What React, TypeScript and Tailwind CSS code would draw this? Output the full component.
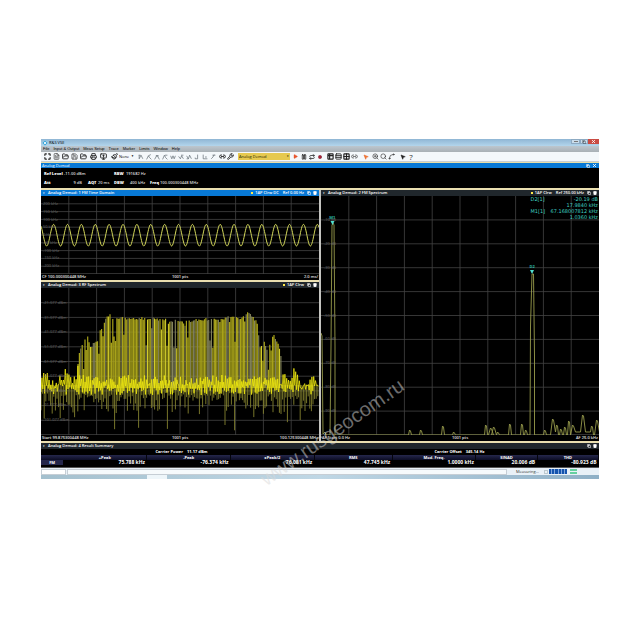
import React from "react";
import {
  Maximize, FileText, FolderOpen, Save, Printer, Wrench, MonitorUp, Paintbrush, Pause, Play, Repeat, Circle,
  Table2, Rows3, Grid2x2, Link2, MousePointer2, ZoomIn, Search, Spline, Copy, Trash2, X,
} from "lucide-react";

const rand = (seed: number) => {
  let s = seed;
  return () => {
    s = (s * 1664525 + 1013904223) % 4294967296;
    return s / 4294967296;
  };
};

const menus = ["File", "Input & Output", "Meas Setup", "Trace", "Marker", "Limits", "Window", "Help"];

function Tool({ label, className = "w-2", children }: { label: string; className?: string; children: React.ReactNode }) {
  return (
    <button type="button" aria-label={label} className={`flex h-2 shrink-0 items-center justify-center text-[#222] ${className}`}>
      {children}
    </button>
  );
}

const ic = "h-[7px] w-[7px]";

const peakShapes = [
  "M1 2h3M2 2v6l3-6 3 6",
  "M1 9l3-6 2 3 3 3M4 3l4-2",
  "M1 9l4-7 4 7M3 3h5",
  "M1 9l3-7 2 4 3 3M5 2h4",
  "M1 3l2 5 2-5 2 5 2-5",
  "M1 4l3 4 2-5 3 5M5 2h4",
  "M1 3l3 5 2-6 3 6M1 8h3",
  "M6 1v7h-4M2 6v2",
  "M2 1v7h7M5 5h3",
  "M2 8l3-3 2-4M4 2h5",
];

function Toolbar() {
  return (
    <div className="flex h-[10px] items-center overflow-hidden border-b border-[#c9cfd4] bg-[#f4f8fb] pl-[2px]">
      <div className="flex items-center gap-[1px]">
        <Tool label="Full screen"><Maximize className={ic} strokeWidth={4} /></Tool>
        <Tool label="New"><FileText className={ic} /></Tool>
        <Tool label="Open"><FolderOpen className={ic} strokeWidth={3} /></Tool>
        <Tool label="Save"><Save className={ic} /></Tool>
        <Tool label="Recall"><FolderOpen className={ic} strokeWidth={3} /></Tool>
        <Tool label="Print" className="w-[10px]"><Printer className={ic} strokeWidth={3} /></Tool>
        <Tool label="Export" className="w-[9px]"><MonitorUp className={ic} strokeWidth={3} /></Tool>
        <Tool label="Preset" className="w-[10px]"><Paintbrush className={ic} strokeWidth={3} /></Tool>
      </div>
      <select aria-label="Marker mode" className="w-[12px] appearance-none bg-transparent text-[4px] leading-none text-black">
        <option>None</option>
      </select>
      <span className="mr-[3px] text-[3px] leading-none">▼</span>
      {peakShapes.map((d, i) => (
        <Tool key={i} label={`Marker function ${i + 1}`} className="w-[8px]">
          <svg viewBox="0 0 10 10" className="h-[6px] w-[6px]" fill="none" stroke="#59636b" strokeWidth="1.1">
            <path d={d} />
          </svg>
        </Tool>
      ))}
      <Tool label="Limit line" className="ml-[2px] w-[8px]"><Link2 className={ic} strokeWidth={3} /></Tool>
      <Tool label="Configure" className="w-[8px]"><Wrench className={ic} strokeWidth={3} /></Tool>
      <select aria-label="Channel" className="ml-[3px] h-[7px] w-[49px] shrink-0 appearance-none bg-[#e6c94f] pl-[1px] text-[4px] leading-none text-[#221c00]">
        <option>Analog Demod</option>
      </select>
      <span className="h-[7px] bg-[#e6c94f] pr-[1px] text-[3px] leading-[7px]">▾</span>
      <Tool label="Run" className="ml-[2px] w-[8px]"><Play className="h-[5px] w-[5px] fill-[#e8532a] text-[#e8532a]" /></Tool>
      <Tool label="Pause" className="w-[8px]"><Pause className="h-[6px] w-[6px]" strokeWidth={3} /></Tool>
      <Tool label="Repeat" className="w-[8px]"><Repeat className="h-[6px] w-[6px]" strokeWidth={3} /></Tool>
      <Tool label="Record" className="w-[8px]"><Circle className="h-[4px] w-[4px] fill-[#b21f35] text-[#7b3844]" strokeWidth={3} /></Tool>
      <Tool label="Result table" className="ml-[3px] w-[8px]"><Table2 className={ic} strokeWidth={4} /></Tool>
      <Tool label="Rows" className="w-[8px]"><Rows3 className={ic} strokeWidth={3} /></Tool>
      <Tool label="Grid" className="w-[8px]"><Grid2x2 className={ic} strokeWidth={4} /></Tool>
      <Tool label="Link" className="w-[8px]"><Link2 className={ic} /></Tool>
      <Tool label="Select" className="ml-[3px] w-[8px]"><MousePointer2 className="h-[6px] w-[6px] fill-[#ef7a35] text-[#e8632a]" /></Tool>
      <Tool label="Zoom in" className="ml-[2px] w-[8px]"><ZoomIn className={ic} /></Tool>
      <Tool label="Zoom" className="w-[8px]"><Search className={ic} /></Tool>
      <Tool label="Trace link" className="w-[8px]"><Spline className={ic} /></Tool>
      <Tool label="Pointer help" className="ml-[3px] w-[8px]"><MousePointer2 className="h-[6px] w-[6px] fill-[#222]" /></Tool>
      <button type="button" aria-label="Help" className="w-[8px] text-center text-[8px] leading-none text-[#333]">?</button>
    </div>
  );
}

function WindowIcons() {
  return (
    <span className="flex items-center gap-[2px] pl-[2px]">
      <button type="button" aria-label="Restore panel"><Copy className="h-[4px] w-[4px]" strokeWidth={4} /></button>
      <button type="button" aria-label="Delete panel"><Trash2 className="h-[4px] w-[4px] fill-white" strokeWidth={4} /></button>
    </span>
  );
}

function PanelTitle({ title, trace, reference, active }: { title: string; trace?: string; reference?: string; active?: boolean }) {
  return (
    <header className={`flex h-[6px] items-center px-[2px] text-[4px] leading-none text-white ${active ? "bg-[#0879d6]" : "bg-[#20272c]"}`}>
      <span className="w-[5px] text-[3px] leading-none">▾</span>
      <h2 className="font-semibold">{title}</h2>
      <span className="ml-auto flex items-center gap-[1px] font-semibold">
        {trace && <i className="h-[2px] w-[2px] bg-[#ffe94a]" />}
        {trace && <span className="pl-[1px]">{trace}</span>}
        {reference && <span className="pl-[3px]">{reference}</span>}
        <WindowIcons />
      </span>
    </header>
  );
}

function PlotFooter({ left, mid, right }: { left: string; mid: string; right: string }) {
  return (
    <footer className="grid h-[6px] grid-cols-3 items-center px-[1px] text-[4px] leading-none font-semibold whitespace-nowrap text-[#e4e4e4]">
      <span>{left}</span>
      <span className="text-center">{mid}</span>
      <span className="text-right">{right}</span>
    </footer>
  );
}

function Grid({ w, h, color }: { w: number; h: number; color: string }) {
  const lines = [];
  for (let i = 1; i < 10; i++) {
    lines.push(<path key={`v${i}`} d={`M${(w * i) / 10} 0V${h}`} />);
    lines.push(<path key={`h${i}`} d={`M0 ${(h * i) / 10}H${w}`} />);
  }
  return <g stroke={color} strokeWidth="0.8">{lines}<path d={`M0 ${h - 0.4}H${w}`} /></g>;
}

function Scale({ labels, className }: { labels: string[]; className: string }) {
  return (
    <ol className={`absolute inset-x-0 flex flex-col justify-between text-[4px] leading-none text-[#666] ${className}`}>
      {labels.map((l) => (
        <li key={l} className="h-[4px]">{l}</li>
      ))}
    </ol>
  );
}

function TimePlot() {
  let d = "";
  for (let x = 0; x <= 278; x += 0.5) {
    const y = 39.2 - 10.8 * Math.cos((2 * Math.PI * (x - 12.6)) / 13.88);
    d += `${x ? "L" : "M"}${x} ${y.toFixed(1)}`;
  }
  return (
    <div className="relative">
      <svg viewBox="0 0 278 78" preserveAspectRatio="none" className="block h-[78px] w-full">
        <Grid w={278} h={78} color="#444" />
        <path d={d} fill="none" stroke="#d3d75a" strokeWidth="1" />
      </svg>
      <Scale className="top-[6px] bottom-[6px] pl-[2px]" labels={["200 kHz", "150 kHz", "100 kHz", "50 kHz", "0 Hz", "-50 kHz", "-100 kHz", "-150 kHz", "-200 kHz"]} />
    </div>
  );
}

const envelope: [number, number][] = [
  [0, 88], [5, 80], [9, 91], [16, 86], [20, 88], [25, 77], [29, 88], [33, 84], [36, 86], [38, 66], [42, 53], [46, 46], [50, 58],
  [53, 52], [56, 54], [59, 42], [64, 31], [68, 23], [72, 29], [84, 28], [90, 29], [110, 29], [130, 31], [142, 33], [158, 30],
  [180, 30], [191, 26], [198, 30], [208, 23], [216, 33], [219, 58], [223, 53], [226, 60], [230, 49], [233, 47], [238, 57],
  [241, 74], [243, 84], [246, 80], [249, 90], [253, 78], [256, 77], [259, 92], [266, 92], [270, 88], [274, 84], [278, 90],
];

function envAt(x: number) {
  for (let i = 1; i < envelope.length; i++) {
    const [x0, y0] = envelope[i - 1];
    const [x1, y1] = envelope[i];
    if (x <= x1) return y0 + ((y1 - y0) * (x - x0)) / (x1 - x0);
  }
  return 90;
}

function RfPlot() {
  const r = rand(19);
  let comb = "", dim = "", bright = "", down = "", noise = "";
  for (let x = 37; x < 241; x += 1.39) {
    const e = envAt(x);
    const short = r() < 0.18 ? r() * 30 : r() * 3;
    const seg = `M${x.toFixed(1)} ${Math.min(e + short, 92).toFixed(1)}V100`;
    const k = r();
    if (k < 0.25) dim += seg;
    else if (k > 0.85) bright += seg;
    else comb += seg;
  }
  for (let x = 0; x < 278; x += 1.6) {
    const outer = x < 37 || x > 241;
    const k = r();
    const len = k < 0.08 ? 26 + r() * 20 : k < 0.5 ? 2 + r() * 8 : 8 + r() * 18;
    down += `M${x.toFixed(1)} ${outer ? 97 : 99}V${(103 + len * 0.9).toFixed(1)}`;
  }
  for (let x = 0; x <= 278; x += 0.9) {
    const outer = x < 37 || x > 241;
    const top = outer ? envAt(x) + r() * 11 : 87 + r() * 10;
    const y = Math.round(x / 0.9) % 2 ? top : 96 + r() * 11;
    noise += `${x ? "L" : "M"}${x.toFixed(1)} ${y.toFixed(1)}`;
  }
  return (
    <div className="relative">
      <svg viewBox="0 0 278 147" preserveAspectRatio="none" className="block h-[147px] w-full">
        <Grid w={278} h={147} color="#444" />
        <path d={dim} stroke="#85855c" strokeWidth="1.1" />
        <path d={down} stroke="#85822f" strokeWidth="0.9" />
        <path d={comb} stroke="#a8a21a" strokeWidth="1.2" />
        <path d={bright} stroke="#d2cc2a" strokeWidth="1.1" />
        <path d={noise} fill="none" stroke="#efe90f" strokeWidth="0.8" />
      </svg>
      <Scale className="top-[13px] bottom-[13px] pl-[2px]" labels={["-21.077 dBm", "-31.077 dBm", "-41.077 dBm", "-51.077 dBm", "-61.077 dBm", "-71.077 dBm", "-81.077 dBm", "-91.077 dBm", "-101.077 dBm"]} />
    </div>
  );
}

const bumps: [number, number, number][] = [
  [89, 5, 1], [100, 5, 1], [122, 9, 1], [133, 3, 1], [165, 10, 1], [170, 7, 2], [173, 8, 2], [177, 3, 1], [189, 11, 1],
  [201, 11, 1], [205, 5, 1], [224, 5, 1], [232, 16, 2], [236, 10, 1], [240, 6, 1], [244, 8, 1], [248, 14, 1], [252, 10, 2],
  [262, 20, 2], [271, 9, 1], [276, 15, 2],
];

function FmPlot() {
  let d = "M0 137L1 140L2 238L4 236L5 239H9L10 150L11 29L12 27L13 29L14 150V239";
  for (const [x, h, w] of bumps.filter((b) => b[0] < 207)) d += `H${x - w - 0.5}L${x - 0.5} ${239 - h}L${x + 0.5} ${240 - h}L${x + w + 0.5} 239`;
  d += "H209L209.5 130L211 78H212.5L213.5 160V239";
  for (const [x, h, w] of bumps.filter((b) => b[0] > 207)) d += `H${x - w - 0.5}L${x - 0.5} ${239 - h}L${x + 0.5} ${240 - h}L${x + w + 0.5} ${236 + (w % 2) * 3}`;
  return (
    <div className="relative">
      <svg viewBox="0 0 278 239" preserveAspectRatio="none" className="block h-[239px] w-full">
        <Grid w={278} h={239} color="#444" />
        <path d={d} fill="none" stroke="#989c4c" strokeWidth="0.9" />
        <path d="M9.500 25h4l-2 4zM209 74h4l-2 4z" fill="#4fe0cf" />
      </svg>
      <Scale className="top-[22px] bottom-[22px] pl-[3px]" labels={["-10 dB", "-20 dB", "-30 dB", "-40 dB", "-50 dB", "-60 dB", "-70 dB", "-80 dB", "-90 dB"]} />
      <span className="absolute top-[20px] left-[3%] text-[4px] leading-none font-bold text-[#2bb5a6]">M1</span>
      <span className="absolute top-[69px] left-[75%] text-[4px] leading-none font-bold text-[#2bb5a6]">D2</span>
      <dl className="absolute top-0 right-0 grid grid-cols-[20px_auto] pr-[1px] font-['DejaVu_Sans'] text-[5px] leading-[6px] text-[#3fd0c2]">
        <dt>D2[1]</dt><dd className="text-right">-20.19 dB</dd>
        <dd className="col-span-2 text-right">17.9840 kHz</dd>
        <dt>M1[1]</dt><dd className="text-right">67.168007812 kHz</dd>
        <dd className="col-span-2 text-right">1.0360 kHz</dd>
      </dl>
    </div>
  );
}

function Settings() {
  return (
    <div className="flex h-5 flex-col justify-around pt-[1px] pl-[3px] text-[4px] leading-[6px] font-semibold whitespace-nowrap text-[#ddd]">
      <div className="grid grid-cols-[20px_50px_12px_auto]">
        <b className="text-white">Ref Level</b><span>-11.00 dBm</span>
        <b className="text-white">RBW</b><span>191682 Hz</span>
      </div>
      <div className="grid grid-cols-[20px_24px_10px_16px_16px_20px_10px_auto]">
        <b className="text-white">Att</b><span className="pr-[6px] text-right">9 dB</span>
        <b className="text-white">AQT</b><span>20 ms</span>
        <b className="text-white">DBW</b><span>400 kHz</span>
        <b className="text-white">Freq</b><span>100.000300448 MHz</span>
      </div>
    </div>
  );
}

const results = [
  ["+Peak", "75.788 kHz"], ["-Peak", "-76.374 kHz"], ["±Peak/2", "76.081 kHz"], ["RMS", "47.745 kHz"],
  ["Mod. Freq.", "1.0000 kHz"], ["SINAD", "20.006 dB"], ["THD", "-80.923 dB"],
];

function ResultSummary() {
  return (
    <section className="bg-black text-white">
      <PanelTitle title="Analog Demod: 4 Result Summary" />
      <div className="grid h-[6px] grid-cols-2 items-center text-[4px] leading-none font-bold">
        <p className="pl-[41%]">Carrier Power<span className="pl-[4px]">11.17 dBm</span></p>
        <p className="pl-[41%]">Carrier Offset<span className="pl-[4px]">345.14 Hz</span></p>
      </div>
      <table className="w-full table-fixed border-collapse text-[4px] leading-none font-bold">
        <colgroup>
          <col className="w-[4%]" /><col className="w-[15%]" /><col className="w-[15%]" /><col className="w-[15%]" />
          <col className="w-[14%]" /><col className="w-[15%]" /><col className="w-[11%]" /><col className="w-[11%]" />
        </colgroup>
        <thead>
          <tr className="h-[5px] bg-linear-to-b from-[#26284c] to-[#0c0d24]">
            <td className="p-0" />
            {results.map(([h]) => <th key={h} scope="col" className="border-r border-[#05050c] p-0">{h}</th>)}
          </tr>
        </thead>
        <tbody>
          <tr className="h-[5px]">
            <th scope="row" className="bg-[#24264a] p-0">FM</th>
            {results.map(([h, v]) => <td key={h} className="p-0 pr-[2px] text-right text-[5px] leading-[5px]">{v}</td>)}
          </tr>
        </tbody>
      </table>
      <div className="h-[3px] border-b border-[#555]" />
    </section>
  );
}

export default function App() {
  return (
    <main className="min-h-screen bg-white px-[41px] pt-[139px] font-['Open_Sans','Noto_Sans',sans-serif]">
      <div className="relative text-black">
        <div className="flex h-[7px] items-center bg-linear-to-b from-[#8fb6d4] to-[#b3d5ec] pl-[2px] text-[4px] leading-none">
          <i className="mr-[2px] h-[4px] w-[4px] rotate-45 border border-[#2b9fd6] bg-white" />
          <h1>R&amp;S VSE</h1>
          <div className="ml-auto flex h-[5px] self-start">
            <button type="button" aria-label="Minimize" className="flex w-[9px] items-center justify-center border border-[#8daac2] bg-[#c9dceb]">
              <i className="h-[1px] w-[4px] bg-[#777]" />
            </button>
            <button type="button" aria-label="Maximize" className="flex w-[8px] items-center justify-center border border-[#8daac2] bg-[#c9dceb]">
              <Copy className="h-[4px] w-[4px]" />
            </button>
            <button type="button" aria-label="Close" className="flex w-[11px] items-center justify-center bg-[#c94b43] text-white">
              <X className="h-[5px] w-[5px]" strokeWidth={4} />
            </button>
          </div>
        </div>
        <nav className="flex h-[6px] items-center gap-[4px] bg-linear-to-b from-[#bcc6ce] to-[#a9b0b5] pl-[2px] font-['Liberation_Sans'] text-[4px] leading-none">
          {menus.map((m) => <button key={m} type="button">{m}</button>)}
        </nav>
        <Toolbar />
        <div className="flex h-[6px] items-center border-t border-[#e9dfa8] bg-[#0879d6] pr-[2px] pl-[1px] text-[4px] leading-none text-white">
          <span>Analog Demod</span>
          <span className="ml-auto flex gap-[2px]">
            <button type="button" aria-label="Restore"><Copy className="h-[4px] w-[4px]" strokeWidth={4} /></button>
            <button type="button" aria-label="Close channel"><X className="h-[5px] w-[5px]" strokeWidth={4} /></button>
          </span>
        </div>
        <div className="bg-black">
          <Settings />
          <div className="grid grid-cols-2 gap-x-[2px] border-y-2 border-[#eadfb0] bg-[#c4c4c0]">
            <div>
              <section className="bg-black">
                <PanelTitle active title="Analog Demod: 1 FM Time Domain" trace="1AP Clrw DC" reference="Ref 0.00 Hz" />
                <TimePlot />
                <PlotFooter left="CF 100.000300448 MHz" mid="1001 pts" right="2.0 ms/" />
              </section>
              <section className="border-t-2 border-[#eadfb0] bg-black">
                <PanelTitle title="Analog Demod: 3 RF Spectrum" trace="1AP Clrw" />
                <RfPlot />
                <PlotFooter left="Start 99.875300448 MHz" mid="1001 pts" right="100.125300448 MHz" />
              </section>
            </div>
            <section className="bg-black">
              <PanelTitle title="Analog Demod: 2 FM Spectrum" trace="1AP Clrw" reference="Ref 250.00 kHz" />
              <FmPlot />
              <PlotFooter left="AF Start 0.0 Hz" mid="1001 pts" right="AF  25.0 kHz" />
            </section>
          </div>
          <ResultSummary />
        </div>
        <div className="flex h-[7px] items-center bg-[#e9f1f7] text-[4px] leading-none text-[#333]">
          <input aria-label="Command" className="h-[6px] w-[25px] border border-[#c6ced5] bg-white" />
          <input aria-label="Status message" readOnly className="ml-[1px] h-[6px] min-w-0 flex-1 border border-[#c6ced5] bg-[#f6fafc]" />
          <span className="w-[37px] pl-[9px]">Measuring...</span>
          <i className="mr-[1px] h-[4px] w-[4px] border border-[#bcc9cf]" />
          <div role="progressbar" aria-label="Measurement progress" className="flex h-[5px] w-[18px] gap-[1px] bg-[#7fa6dc]">
            {[0, 1, 2, 3, 4, 5].map((i) => <i key={i} className="flex-1 bg-[#1454ae]" />)}
          </div>
          <span className="mr-[22px] ml-[3px] flex w-[7px] flex-col gap-[1px]">
            <i className="h-[2px] bg-[#65d0a0]" />
            <i className="h-[2px] bg-[#65d0a0]" />
          </span>
        </div>
        <div className="flex h-[4px] items-center bg-linear-to-r from-[#a4c0ce] via-[#bfd7e5] to-[#8fb0c6]">
          <i className="ml-[19%] h-[4px] w-[20px] bg-[#eef6fa]" />
        </div>
        <div className="pointer-events-none absolute inset-0 flex items-center justify-center pt-[246px] pl-[24px]">
          <span className="-rotate-[35deg] font-['Liberation_Sans'] text-[20px] leading-none text-[#d8d8d8]/50">www.rusgeocom.ru</span>
        </div>
      </div>
    </main>
  );
}
